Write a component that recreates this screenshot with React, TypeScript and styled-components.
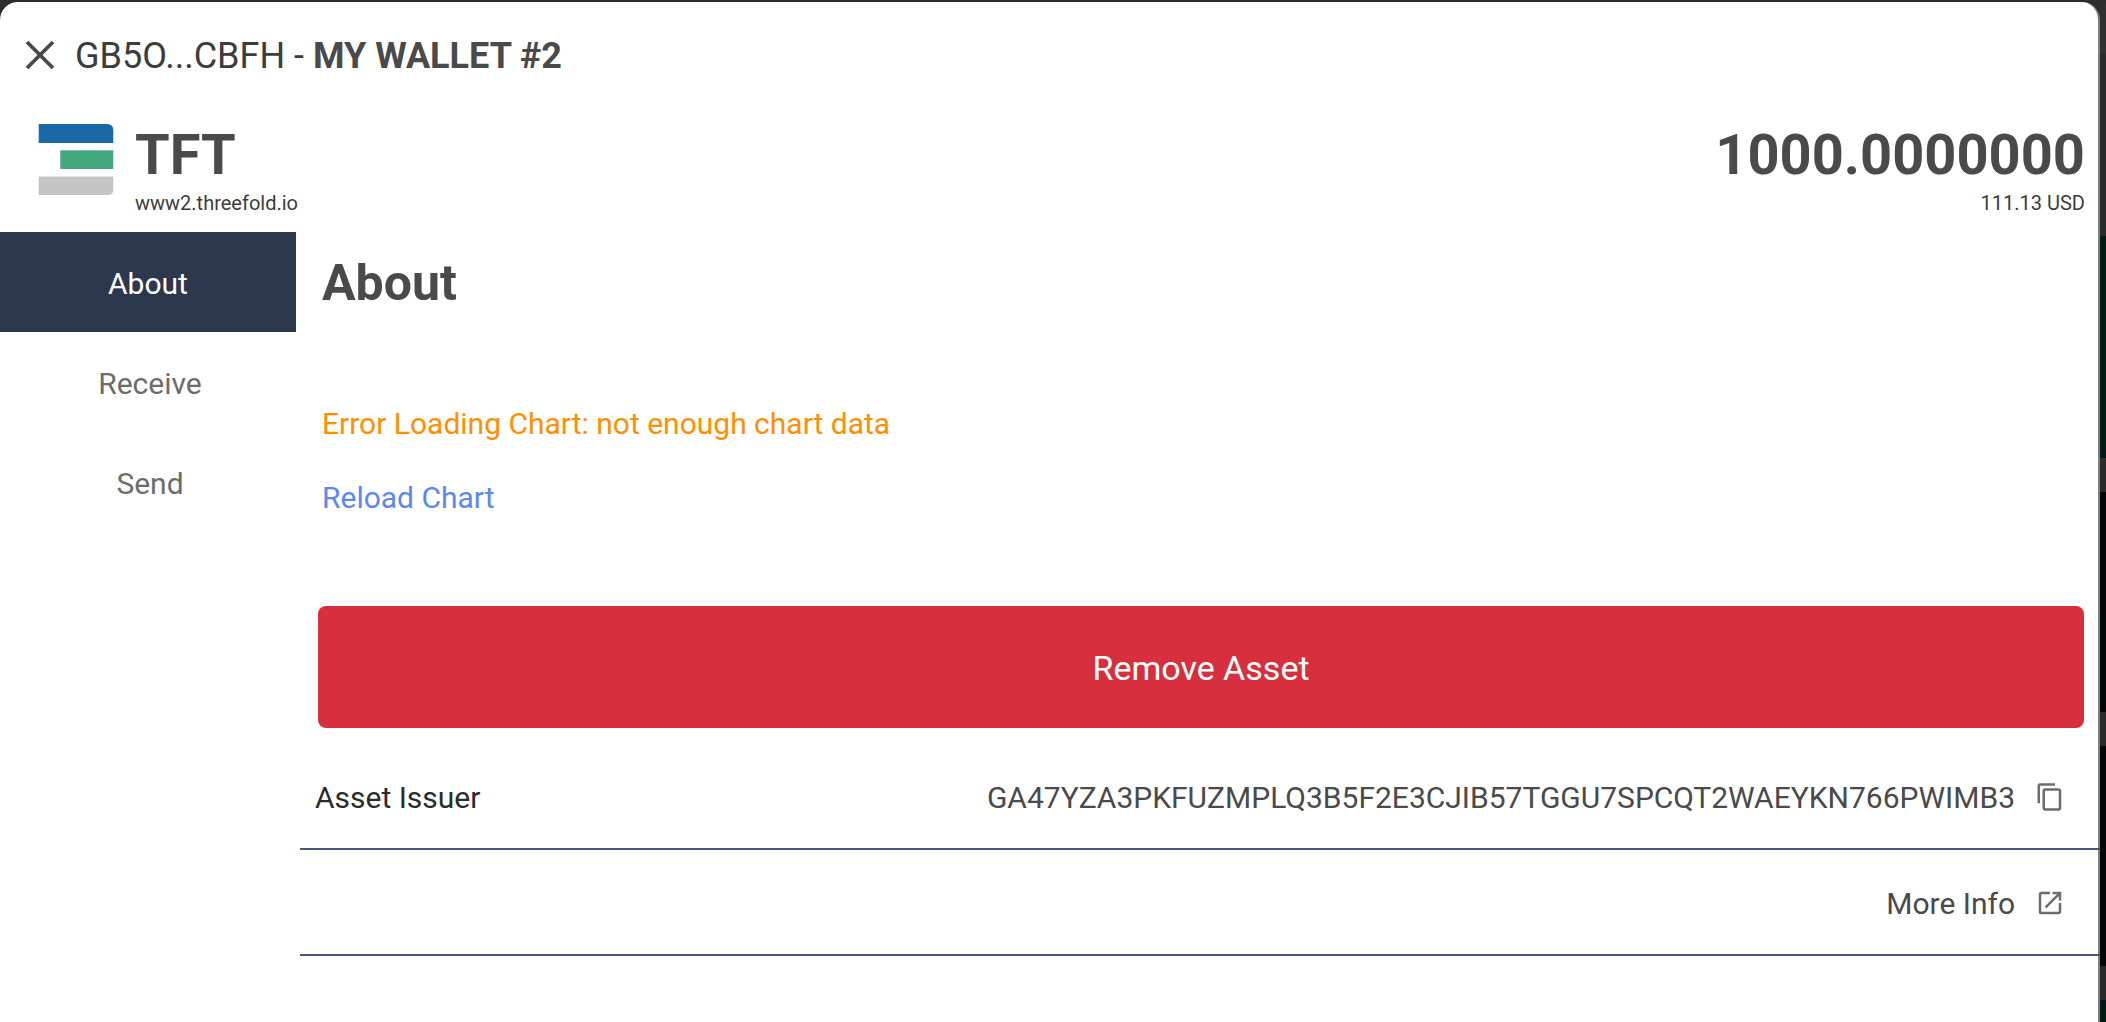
import React, { useState } from 'react';
import styled, { createGlobalStyle } from 'styled-components';
import { MdContentCopy, MdOpenInNew } from 'react-icons/md';

const GlobalStyle = createGlobalStyle`
  *, *::before, *::after { box-sizing: border-box; }
  body {
    margin: 0;
    background: #2d2d2d;
    color: #4a4a4a;
    font-family: Roboto, "Liberation Sans", sans-serif;
  }
  h1, h2, p { margin: 0; }
  button { border: 0; padding: 0; background: none; font: inherit; cursor: pointer; }
`;

const Backdrop = styled.div`
  display: grid;
  grid-template-columns: minmax(0, 1fr) 6px;
  min-height: 100vh;
  padding-top: 2px;
`;

const Edge = styled.div`
  display: flex;
  flex-direction: column;
`;

const EdgeBlock = styled.div<{ $size: number; $color: string }>`
  flex: 0 0 ${(p) => p.$size}px;
  background: ${(p) => p.$color};

  &:last-child { flex: 1 0 auto; }
`;

const Modal = styled.section`
  background: #fff;
  border-right: 2px solid #7e7e7e;
  border-radius: 18px 18px 0 0;
`;

const TitleBar = styled.header`
  display: flex;
  align-items: center;
  gap: 19px;
  height: 106px;
  padding: 0 24px;
`;

const CloseButton = styled.button`
  display: flex;
  width: 32px;
  height: 32px;
  color: #4a4a4a;
`;

const Title = styled.h1`
  padding-top: 2px;
  color: #3c3c3c;
  font-size: 36px;
  font-weight: 400;
  line-height: 44px;

  strong { color: #4a4a4a; font-weight: 700; }
`;

const Summary = styled.div`
  display: flex;
  justify-content: space-between;
  height: 124px;
  padding: 15px 13px 0 38px;
`;

const Asset = styled.div`
  display: flex;
  gap: 21px;
`;

const Logo = styled.svg`
  width: 76px;
  height: 76px;
`;

const Figures = styled.div<{ $align?: string }>`
  text-align: ${(p) => p.$align ?? 'left'};
`;

const Big = styled.p`
  font-size: 56px;
  font-weight: 700;
  line-height: 64px;
`;

const Small = styled.p`
  color: #3c3c3c;
  font-size: 20px;
  line-height: 32px;
`;

const Columns = styled.div`
  display: grid;
  grid-template-columns: 300px minmax(0, 1fr);
`;

const Tabs = styled.nav`
  display: flex;
  flex-direction: column;
`;

const Tab = styled.button<{ $active: boolean }>`
  && {
    height: 100px;
    margin-right: ${(p) => (p.$active ? 4 : 0)}px;
    padding-top: 2px;
    background: ${(p) => (p.$active ? '#2b384e' : 'transparent')};
    color: ${(p) => (p.$active ? '#fff' : '#6c6c6c')};
    font-size: 30px;
  }
`;

const Content = styled.main`
  padding-bottom: 64px;
`;

const Heading = styled.h2`
  padding-left: 22px;
  font-size: 50px;
  font-weight: 700;
  line-height: 102px;
`;

const ChartStatus = styled.div`
  display: flex;
  flex-direction: column;
  align-items: flex-start;
  gap: 34px;
  padding: 70px 22px 88px;
  font-size: 30px;
  line-height: 40px;
`;

const ErrorText = styled.p`
  color: #ff8f00;
`;

const LinkButton = styled.button`
  && {
    color: #5a87f0;
    line-height: 40px;
  }
`;

const ButtonRow = styled.div`
  display: flex;
  padding: 0 14px 16px 18px;
`;

const RemoveButton = styled.button`
  && {
    flex: 1;
    height: 122px;
    padding-top: 2px;
    border-radius: 8px;
    background: #d72f3d;
    color: #fff;
    font-size: 34px;
  }
`;

const DetailRow = styled.div`
  display: flex;
  align-items: center;
  height: 106px;
  margin-right: -2px;
  padding: 2px 35px 0 15px;
  border-bottom: 2px solid #4a5578;
  font-size: 30px;
`;

const Label = styled.span`
  color: #2b2b2b;
`;

const Value = styled.span`
  margin-left: auto;
`;

const MoreLink = styled.a`
  display: flex;
  align-items: center;
  margin-left: auto;
  color: inherit;
  text-decoration: none;
`;

const IconSlot = styled.span`
  display: flex;
  margin-left: 20px;
  color: #6c6c6c;
`;

const IconButton = styled.button`
  && {
    display: flex;
    margin-left: 20px;
    color: #6c6c6c;
  }
`;

const issuer = 'GA47YZA3PKFUZMPLQ3B5F2E3CJIB57TGGU7SPCQT2WAEYKN766PWIMB3';
const tabs = ['About', 'Receive', 'Send'];
const edgeBlocks: [number, string][] = [
  [52, '#303030'],
  [182, '#292b2b'],
  [222, '#011917'],
  [34, '#2b2b2b'],
  [220, '#03070a'],
  [34, '#2b2b2b'],
  [220, '#03070a'],
  [34, '#2b2b2b'],
  [22, '#011917'],
];

export default function App() {
  const [active, setActive] = useState('About');

  return (
    <>
      <GlobalStyle />
      <Backdrop>
        <Modal aria-label="Asset details">
          <TitleBar>
            <CloseButton aria-label="Close">
              <svg width="32" height="32" viewBox="0 0 32 32" fill="none" stroke="currentColor" strokeWidth="3.8">
                <path d="M3 3 L29 29 M29 3 L3 29" />
              </svg>
            </CloseButton>
            <Title>GB5O...CBFH - <strong>MY WALLET #2</strong></Title>
          </TitleBar>
          <Summary>
            <Asset>
              <Logo viewBox="0 0 76 76" role="img" aria-label="ThreeFold">
                <path d="M0.7 1 H69 Q75.3 1.5 75.3 7 V20 H0.7 Z" fill="#1a67a6" />
                <path d="M22.3 27.3 H75.3 V46 H22.3 Z" fill="#45a97f" />
                <path d="M0.7 53.6 H75.3 V67 Q75 72 70 72 H0.7 Z" fill="#c5c5c5" />
              </Logo>
              <Figures>
                <Big>TFT</Big>
                <Small>www2.threefold.io</Small>
              </Figures>
            </Asset>
            <Figures $align="right">
              <Big>1000.0000000</Big>
              <Small>111.13 USD</Small>
            </Figures>
          </Summary>
          <Columns>
            <Tabs>
              {tabs.map((t) => (
                <Tab key={t} $active={t === active} onClick={() => setActive(t)}>{t}</Tab>
              ))}
            </Tabs>
            <Content>
              <Heading>About</Heading>
              <ChartStatus>
                <ErrorText>Error Loading Chart: not enough chart data</ErrorText>
                <LinkButton>Reload Chart</LinkButton>
              </ChartStatus>
              <ButtonRow>
                <RemoveButton>Remove Asset</RemoveButton>
              </ButtonRow>
              <DetailRow>
                <Label>Asset Issuer</Label>
                <Value>{issuer}</Value>
                <IconButton aria-label="Copy issuer"><MdContentCopy size={30} /></IconButton>
              </DetailRow>
              <DetailRow>
                <MoreLink href="#more">
                  More Info
                  <IconSlot><MdOpenInNew size={30} /></IconSlot>
                </MoreLink>
              </DetailRow>
            </Content>
          </Columns>
        </Modal>
        <Edge aria-hidden="true">
          {edgeBlocks.map(([size, color], i) => (
            <EdgeBlock key={i} $size={size} $color={color} />
          ))}
        </Edge>
      </Backdrop>
    </>
  );
}
